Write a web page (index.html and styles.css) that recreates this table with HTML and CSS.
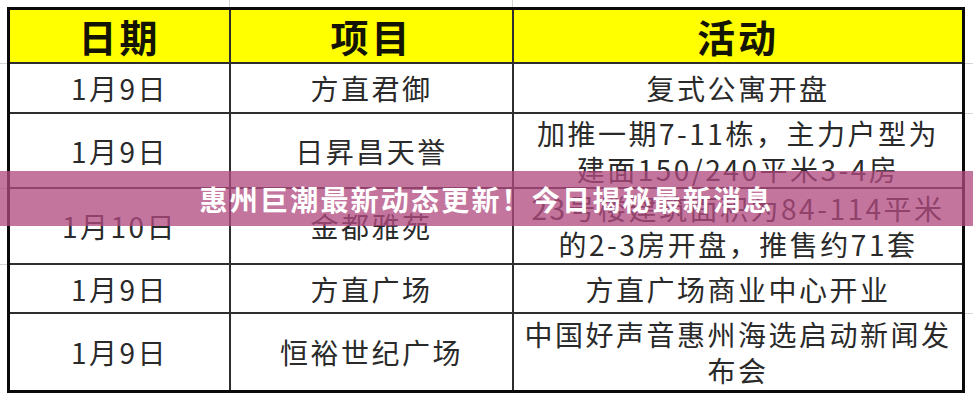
FILE: index.html
```html
<!DOCTYPE html>
<html lang="zh-CN">
<head>
<meta charset="utf-8">
<title>惠州巨潮最新动态更新</title>
<link rel="stylesheet" href="styles.css">
</head>
<body>
<div class="page">
  <div class="sheet">
    <div class="cell head">日期</div>
    <div class="cell head">项目</div>
    <div class="cell head last-col">活动</div>

    <div class="cell">1月9日</div>
    <div class="cell">方直君御</div>
    <div class="cell last-col">复式公寓开盘</div>

    <div class="cell">1月9日</div>
    <div class="cell">日昇昌天誉</div>
    <div class="cell last-col multi">加推一期7-11栋，主力户型为<br>建面150/240平米3-4房</div>

    <div class="cell">1月10日</div>
    <div class="cell">金都雅苑</div>
    <div class="cell last-col multi">23号楼建筑面积为84-114平米<br>的2-3房开盘，推售约71套</div>

    <div class="cell">1月9日</div>
    <div class="cell">方直广场</div>
    <div class="cell last-col">方直广场商业中心开业</div>

    <div class="cell last-row">1月9日</div>
    <div class="cell last-row">恒裕世纪广场</div>
    <div class="cell last-row last-col multi">中国好声音惠州海选启动新闻发<br>布会</div>
  </div>
  <div class="banner">惠州巨潮最新动态更新！今日揭秘最新消息</div>
</div>
</body>
</html>
```

FILE: styles.css
```css
html, body {
  margin: 0;
  padding: 0;
  background: #ffffff;
}

.page {
  position: relative;
  width: 973px;
  height: 400px;
  overflow: hidden;
  padding: 7px 0 0 7px;
  box-sizing: border-box;
  background:
    linear-gradient(#d4d4d4, #d4d4d4) 229px 0 / 1px 7px no-repeat,
    linear-gradient(#d4d4d4, #d4d4d4) 512px 0 / 1px 7px no-repeat,
    linear-gradient(#d4d4d4, #d4d4d4) 0 63px / 7px 1px no-repeat,
    linear-gradient(#d4d4d4, #d4d4d4) 0 188px / 7px 1px no-repeat,
    linear-gradient(#d4d4d4, #d4d4d4) 0 264px / 7px 1px no-repeat,
    linear-gradient(#d4d4d4, #d4d4d4) 965px 63px / 8px 1px no-repeat,
    linear-gradient(#d4d4d4, #d4d4d4) 965px 113px / 8px 1px no-repeat,
    linear-gradient(#d4d4d4, #d4d4d4) 965px 313px / 8px 1px no-repeat,
    #ffffff;
}

.sheet {
  width: 958px;
  box-sizing: border-box;
  border: 3px solid #0a0a0a;
  display: grid;
  grid-template-columns: 221px 283px 1fr;
  grid-template-rows: 54px 50px 75px 76px 49px 76px;
  font-family: "Noto Sans CJK SC", "Noto Sans", sans-serif;
  font-size: 28px;
  letter-spacing: 2.5px;
  color: #2a2a2a;
}

.cell {
  display: flex;
  align-items: center;
  justify-content: center;
  text-align: center;
  border-right: 2px solid #2e2e2e;
  border-bottom: 2px solid #2e2e2e;
  line-height: 36px;
  white-space: nowrap;
  overflow: visible;
}

.cell.last-col {
  border-right: none;
}

.cell.last-row {
  border-bottom: none;
}

.cell.multi {
  line-height: 36px;
}

.cell.head {
  background: #ffff00;
  font-size: 38px;
  font-weight: 700;
  letter-spacing: 3px;
  color: #141405;
}

.banner {
  position: absolute;
  left: 0;
  right: 0;
  top: 171px;
  height: 55px;
  display: flex;
  align-items: center;
  justify-content: center;
  background: rgba(176, 74, 128, 0.76);
  color: #ffffff;
  font-family: "Noto Sans CJK SC", "Noto Sans", sans-serif;
  font-size: 28px;
  font-weight: 700;
  letter-spacing: 2.2px;
}
```
